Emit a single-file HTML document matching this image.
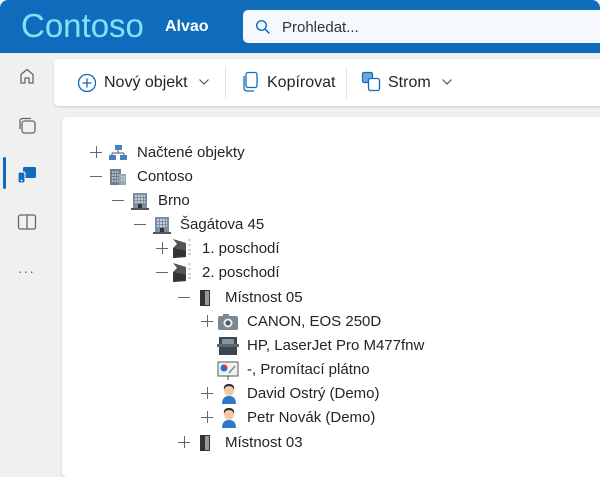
<!DOCTYPE html>
<html><head><meta charset="utf-8"><style>
*{box-sizing:border-box;margin:0;padding:0}
body{width:600px;height:457px;overflow:hidden;background:#f0f0f0;font-family:"Liberation Sans",sans-serif;color:#242424;position:relative}
.hdr{position:absolute;left:0;top:0;width:600px;height:53px;background:#0f6cbd;border-radius:8px 8px 0 0}
.logo{position:absolute;left:21px;top:7px;font-size:33px;color:#7ee3f5;font-weight:300}
.alv{position:absolute;left:165px;top:18px;font-size:16px;color:#fff;font-weight:bold}
.srch{position:absolute;left:243px;top:10px;width:370px;height:33px;background:#f5f9fd;border-radius:5px}
.srch span{position:absolute;left:39px;top:9px;font-size:15px;color:#333}
.side svg{position:absolute}
.bar{position:absolute;left:54px;top:59px;width:560px;height:47px;background:#fff;border-radius:5px;box-shadow:0 1px 2px rgba(0,0,0,.15)}
.bar span{position:absolute;top:15px;font-size:16px}
.sep{position:absolute;top:8px;width:1px;height:32px;background:#e3e3e3}
.main{position:absolute;left:62px;top:117px;width:560px;height:360px;background:#fff;border-radius:5px;box-shadow:0 1px 2px rgba(0,0,0,.15)}
.row{position:absolute;height:20px;font-size:15px;white-space:nowrap}
.row>span{top:2px}
.mi{position:absolute;left:1px;top:10px;width:12px;height:1.3px;background:#666}
.pl{position:absolute;left:1px;top:4px;width:12px;height:12px}
.pl:before{content:"";position:absolute;left:0;top:6px;width:12px;height:1.3px;background:#666}
.pl:after{content:"";position:absolute;left:5.5px;top:0;width:1.3px;height:12px;background:#666}
.ic{position:absolute;top:2px}
</style></head><body>
<div class="hdr"><div class="logo">Contoso</div><div class="alv">Alvao</div>
<div class="srch"><svg style="position:absolute;left:12px;top:9px" width="16" height="16" viewBox="0 0 16 16"><circle cx="6.5" cy="6.5" r="4.8" fill="none" stroke="#0f6cbd" stroke-width="1.4"/><path d="M10 10L14.5 14.5" stroke="#0f6cbd" stroke-width="1.5"/></svg><span>Prohledat...</span></div></div>
<div class="side">
<svg style="left:18px;top:67px" width="18" height="18" viewBox="0 0 18 18"><path d="M3 16V7.5L9 2.5L15 7.5V16H11V11H7V16Z" fill="none" stroke="#666" stroke-width="1.3" stroke-linejoin="round"/></svg>
<svg style="left:17px;top:116px" width="20" height="20" viewBox="0 0 20 20"><rect x="5" y="5" width="13" height="12" rx="2.5" fill="none" stroke="#666" stroke-width="1.3"/><path d="M3 13V5Q3 2.5 5.5 2.5H14" fill="none" stroke="#666" stroke-width="1.3"/></svg>
<div style="position:absolute;left:3px;top:157px;width:3px;height:32px;background:#0f6cbd;border-radius:2px"></div>
<svg style="left:17px;top:165px" width="20" height="20" viewBox="0 0 20 20"><rect x="6" y="2" width="13" height="11" rx="1.5" fill="#0f6cbd"/><rect x="1" y="7" width="7" height="11" rx="1.5" fill="#0f6cbd" stroke="#f0f0f0" stroke-width="1.2"/><circle cx="4.5" cy="15.5" r=".9" fill="#fff"/></svg>
<svg style="left:17px;top:213px" width="20" height="18" viewBox="0 0 20 18"><rect x="1.5" y="2" width="17" height="14" rx="2" fill="none" stroke="#666" stroke-width="1.3"/><path d="M10 2V16" stroke="#666" stroke-width="1.3"/></svg>
<div style="position:absolute;left:18px;top:263px;font-size:14px;color:#666;letter-spacing:1px">···</div>
</div>
<div class="bar">
<svg style="position:absolute;left:23px;top:14px" width="20" height="20" viewBox="0 0 20 20"><circle cx="10" cy="10" r="8.5" fill="none" stroke="#0f6cbd" stroke-width="1.3"/><path d="M10 5.5V14.5M5.5 10H14.5" stroke="#0f6cbd" stroke-width="1.3"/></svg>
<span style="left:50px">Nový objekt</span>
<svg style="position:absolute;left:144px;top:19px" width="12" height="8" viewBox="0 0 12 8"><path d="M1.5 1.5L6 6L10.5 1.5" fill="none" stroke="#555" stroke-width="1.2"/></svg>
<div class="sep" style="left:171px"></div>
<svg style="position:absolute;left:188px;top:12px" width="18" height="22" viewBox="0 0 18 22"><rect x="4" y="1.5" width="11" height="15" rx="2" fill="none" stroke="#0f6cbd" stroke-width="1.3"/><path d="M2 5V17Q2 20 5 20H12" fill="none" stroke="#0f6cbd" stroke-width="1.3"/></svg>
<span style="left:213px">Kopírovat</span>
<div class="sep" style="left:292px"></div>
<svg style="position:absolute;left:307px;top:12px" width="22" height="22" viewBox="0 0 22 22"><rect x="1.5" y="1.5" width="10" height="10" rx="1.5" fill="#6ea6dc" stroke="#0f6cbd" stroke-width="1.2"/><rect x="7.5" y="7.5" width="11" height="12" rx="2" fill="#fff" stroke="#0f6cbd" stroke-width="1.3"/></svg>
<span style="left:334px">Strom</span>
<svg style="position:absolute;left:387px;top:19px" width="12" height="8" viewBox="0 0 12 8"><path d="M1.5 1.5L6 6L10.5 1.5" fill="none" stroke="#555" stroke-width="1.2"/></svg>
</div>
<div class="main"></div>

<div class="row" style="left:89px;top:142px"><i class="pl"></i>
<svg class="ic" style="left:19px" width="20" height="18" viewBox="0 0 20 18"><rect x="7" y="1" width="7" height="5" fill="#4a7fc1"/><path d="M10 6V9M4 9H16M4 9V11M16 9V11" stroke="#555"/><rect x="1" y="11" width="7" height="5" fill="#4a7fc1"/><rect x="12" y="11" width="7" height="5" fill="#4a7fc1"/></svg>
<span style="position:absolute;left:48px">Načtené objekty</span></div>

<div class="row" style="left:89px;top:166px"><i class="mi"></i>
<svg class="ic" style="left:20px" width="18" height="18" viewBox="0 0 18 18"><rect x="1" y="1" width="11" height="16" fill="#6d7f91"/><rect x="10" y="6" width="7" height="11" fill="#98a6b3"/><path d="M3 4H10M3 7H10M3 10H10M3 13H10M12 9H16M12 12H16" stroke="#dfe6ec" stroke-width="1.3" stroke-dasharray="1.5 1"/></svg>
<span style="position:absolute;left:48px">Contoso</span></div>

<div class="row" style="left:111px;top:190px"><i class="mi"></i>
<svg class="ic" style="left:20px" width="18" height="18" viewBox="0 0 18 18"><rect x="2" y="1" width="14" height="16" fill="#7d8e9e"/><path d="M4 4H14M4 7H14M4 10H14" stroke="#e0e6eb" stroke-width="1.5" stroke-dasharray="2 1"/><rect x="7" y="12" width="4" height="5" fill="#333"/><rect x="0" y="16" width="18" height="2" fill="#555"/></svg>
<span style="position:absolute;left:47px">Brno</span></div>

<div class="row" style="left:133px;top:214px"><i class="mi"></i>
<svg class="ic" style="left:20px" width="18" height="18" viewBox="0 0 18 18"><rect x="2" y="1" width="14" height="16" fill="#7d8e9e"/><path d="M4 4H14M4 7H14M4 10H14" stroke="#e0e6eb" stroke-width="1.5" stroke-dasharray="2 1"/><rect x="7" y="12" width="4" height="5" fill="#333"/><rect x="0" y="16" width="18" height="2" fill="#555"/></svg>
<span style="position:absolute;left:47px">Šagátova 45</span></div>

<div class="row" style="left:155px;top:238px"><i class="pl"></i>
<svg class="ic" style="left:17px;top:0px" width="22" height="21" viewBox="0 0 22 21"><path d="M1 1L14 5V19L1 20L5 14L1 10L5 6Z" fill="#555"/><path d="M1 10L14 13V19L1 20Z" fill="#333"/><path d="M16 2H19M16 7H19M16 12H19M16 16H19" stroke="#aaa"/></svg>
<span style="position:absolute;left:47px">1. poschodí</span></div>

<div class="row" style="left:155px;top:262px"><i class="mi"></i>
<svg class="ic" style="left:17px;top:0px" width="22" height="21" viewBox="0 0 22 21"><path d="M1 1L14 5V19L1 20L5 14L1 10L5 6Z" fill="#555"/><path d="M1 10L14 13V19L1 20Z" fill="#333"/><path d="M16 2H19M16 7H19M16 12H19M16 16H19" stroke="#aaa"/></svg>
<span style="position:absolute;left:47px">2. poschodí</span></div>

<div class="row" style="left:177px;top:287px"><i class="mi"></i>
<svg class="ic" style="left:22px" width="12" height="18" viewBox="0 0 12 18"><rect x="1" y="1" width="10" height="16" fill="#333"/><rect x="6" y="2" width="4" height="14" fill="#999"/></svg>
<span style="position:absolute;left:48px">Místnost 05</span></div>

<div class="row" style="left:200px;top:311px"><i class="pl"></i>
<svg class="ic" style="left:17px" width="22" height="18" viewBox="0 0 22 18"><rect x="1" y="3" width="20" height="14" rx="2" fill="#7b8893"/><rect x="6" y="1" width="6" height="3" fill="#7b8893"/><circle cx="11" cy="10" r="4.5" fill="#e9eef2"/><circle cx="11" cy="10" r="2.5" fill="#4d5a66"/></svg>
<span style="position:absolute;left:47px">CANON, EOS 250D</span></div>

<div class="row" style="left:200px;top:335px">
<svg class="ic" style="left:17px" width="22" height="18" viewBox="0 0 22 18"><rect x="2" y="0" width="18" height="18" fill="#3c4650"/><rect x="5" y="2" width="12" height="6" fill="#8794a0"/><rect x="0" y="7" width="22" height="3" fill="#5a6670"/></svg>
<span style="position:absolute;left:47px">HP, LaserJet Pro M477fnw</span></div>

<div class="row" style="left:200px;top:359px">
<svg class="ic" style="left:17px" width="22" height="20" viewBox="0 0 22 20"><rect x="1" y="1" width="20" height="14" fill="#eef2f5" stroke="#555"/><circle cx="7" cy="7" r="3.5" fill="#2f6fb8"/><path d="M7 3.5A3.5 3.5 0 0 1 10.5 7H7Z" fill="#d33"/><path d="M12 12L18 5" stroke="#888" stroke-width="1.5"/><path d="M11 15V19" stroke="#555"/></svg>
<span style="position:absolute;left:47px">-, Promítací plátno</span></div>

<div class="row" style="left:200px;top:383px"><i class="pl"></i>
<svg class="ic" style="left:20px;top:0px" width="18" height="21" viewBox="0 0 18 21"><path d="M2 21Q2 13 9 13Q16 13 16 21Z" fill="#2f78c8"/><ellipse cx="9" cy="7" rx="5" ry="6" fill="#f4c9a6"/><path d="M4 7Q3 1 9 1Q15 1 14 7Q13 3 9 3Q5 3 4 7Z" fill="#2b2b2b"/></svg>
<span style="position:absolute;left:47px">David Ostrý (Demo)</span></div>

<div class="row" style="left:200px;top:407px"><i class="pl"></i>
<svg class="ic" style="left:20px;top:0px" width="18" height="21" viewBox="0 0 18 21"><path d="M2 21Q2 13 9 13Q16 13 16 21Z" fill="#2f78c8"/><ellipse cx="9" cy="7" rx="5" ry="6" fill="#f4c9a6"/><path d="M4 7Q3 1 9 1Q15 1 14 7Q13 3 9 3Q5 3 4 7Z" fill="#2b2b2b"/></svg>
<span style="position:absolute;left:47px">Petr Novák (Demo)</span></div>

<div class="row" style="left:177px;top:432px"><i class="pl"></i>
<svg class="ic" style="left:22px" width="12" height="18" viewBox="0 0 12 18"><rect x="1" y="1" width="10" height="16" fill="#333"/><rect x="6" y="2" width="4" height="14" fill="#999"/></svg>
<span style="position:absolute;left:48px">Místnost 03</span></div>
</body></html>
